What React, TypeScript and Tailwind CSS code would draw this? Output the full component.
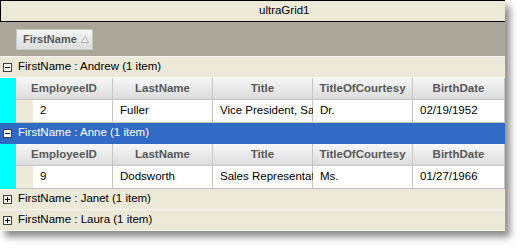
const font = { fontFamily: '"Liberation Sans", Arial, sans-serif' };

const cols = [
  { name: "EmployeeID", w: "w-[97px]" },
  { name: "LastName", w: "w-[100px]" },
  { name: "Title", w: "w-[100px]" },
  { name: "TitleOfCourtesy", w: "w-[100px]" },
  { name: "BirthDate", w: "w-[92px]" },
];

type Emp = { id: string; last: string; title: string; toc: string; birth: string };

function ExpandBox({ open }: { open: boolean }) {
  return (
    <span className="relative ml-[3px] inline-block size-[9px] shrink-0 border border-[#404040] bg-white">
      <span className="absolute left-[1px] top-[3px] h-px w-[5px] bg-black" />
      {!open && <span className="absolute left-[3px] top-[1px] h-[5px] w-px bg-black" />}
    </span>
  );
}

function GroupRow({ name, open, selected }: { name: string; open: boolean; selected?: boolean }) {
  return (
    <div
      className={
        "flex h-[21px] items-center gap-[6px] border-b text-[11.5px] " +
        (selected ? "border-[#316ac5] bg-[#316ac5] text-white" : "border-[#f8f7f0] bg-[#ece9d8] text-black")
      }
    >
      <ExpandBox open={open} />
      <span>FirstName : {name} (1 item)</span>
    </div>
  );
}

function Child({ e }: { e: Emp }) {
  const cells = [e.id, e.last, e.title, e.toc, e.birth];
  return (
    <div className="flex">
      <div className="w-[16px] shrink-0 bg-[#00ffff]" />
      <div className="flex flex-col">
        <div className="flex h-[22px]">
          {cols.map((c) => (
            <div
              key={c.name}
              className={
                c.w +
                " flex items-center justify-center border-r border-b border-[#c4c4c4] bg-gradient-to-b from-[#f7f7f7] to-[#dcdcdc] text-[11.5px] font-bold text-[#585858]"
              }
            >
              {c.name}
            </div>
          ))}
        </div>
        <div className="flex h-[23px] border-b border-[#c4c4c4]">
          <div className="w-[17px] shrink-0 bg-[#ece9d8]" />
          {cells.map((v, i) => (
            <div
              key={i}
              className={
                (i === 0 ? "w-[80px]" : cols[i].w) +
                " flex items-center whitespace-nowrap border-r border-[#c4c4c4] bg-white pl-[7px] text-[11.5px] text-black"
              }
            >
              {v}
            </div>
          ))}
        </div>
      </div>
    </div>
  );
}

export default function App() {
  return (
    <div className="h-[248px] w-[521px] overflow-hidden bg-white" style={font}>
      <div className="w-[505px] bg-[#ece9d8] shadow-[5px_6px_7px_rgba(0,0,0,0.45)]">
        <div className="flex h-[22px] items-center border-t border-l border-b border-black bg-[#ece9d8] pl-[258px] text-[11.5px] text-black">
          ultraGrid1
        </div>
        <div className="flex h-[35px] items-start border-b border-[#f8f7f0] bg-[#aaa798] pl-[16px] pt-[7px]">
          <div className="flex h-[21px] w-[77px] shrink-0 items-center justify-between whitespace-nowrap border border-[#c8c8c8] bg-gradient-to-b from-[#f4f4f4] to-[#dedede] pl-[6px] pr-[3px] text-[11px] font-bold text-[#585858]">
            FirstName
            <svg width="8" height="7" viewBox="0 0 8 7" className="shrink-0">
              <path d="M4 0.5 L7.5 6.5 L0.5 6.5 Z" fill="#fff" stroke="#b0b0b0" strokeWidth="1" />
            </svg>
          </div>
        </div>
        <GroupRow name="Andrew" open />
        <Child e={{ id: "2", last: "Fuller", title: "Vice President, Sa", toc: "Dr.", birth: "02/19/1952" }} />
        <GroupRow name="Anne" open selected />
        <Child e={{ id: "9", last: "Dodsworth", title: "Sales Representat", toc: "Ms.", birth: "01/27/1966" }} />
        <GroupRow name="Janet" open={false} />
        <GroupRow name="Laura" open={false} />
      </div>
    </div>
  );
}
